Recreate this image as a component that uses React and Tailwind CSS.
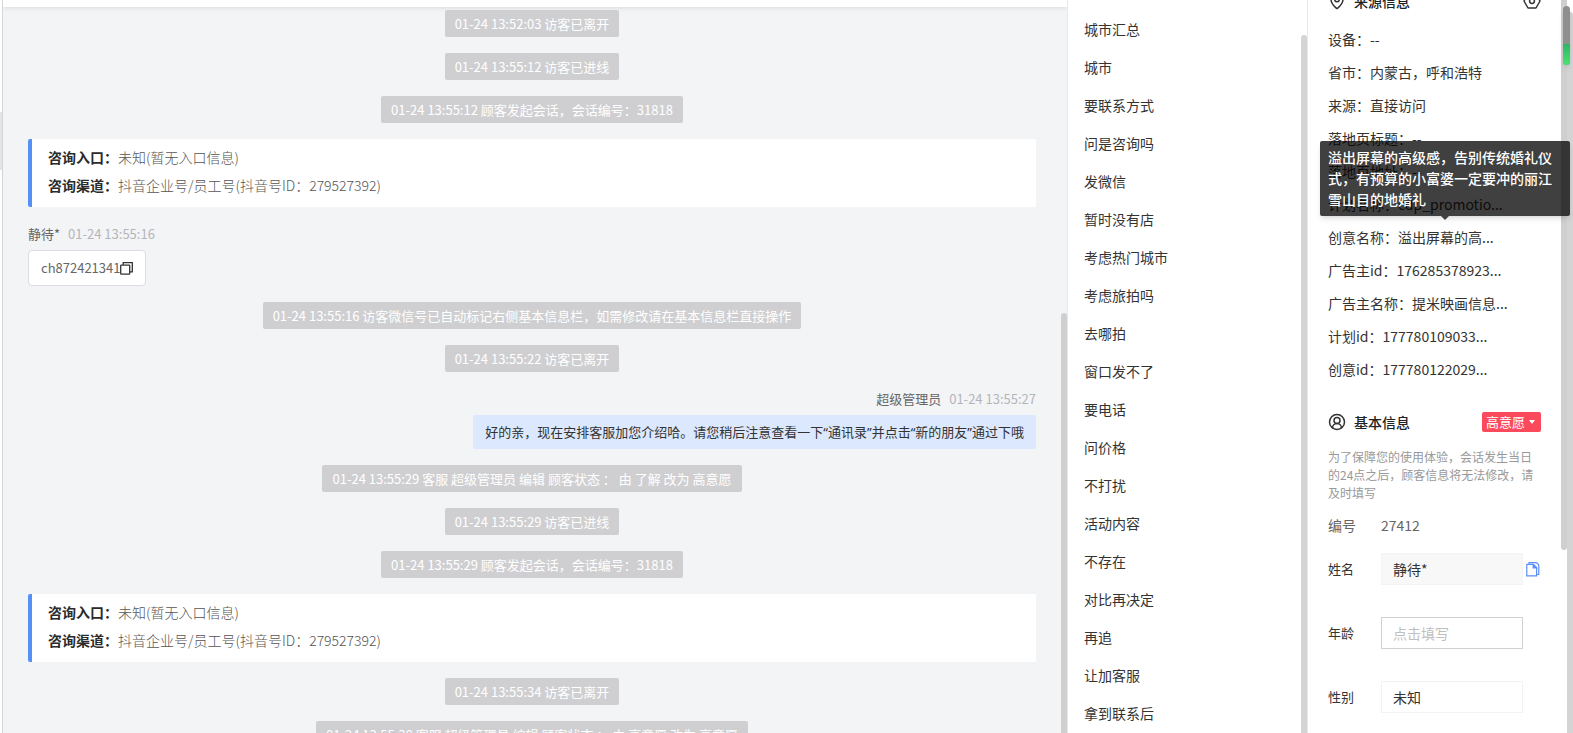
import { useState } from "react";
import { MapPin, CircleUserRound } from "lucide-react";

const messages = [
  { type: "system", text: "01-24 13:52:03 访客已离开" },
  { type: "system", text: "01-24 13:55:12 访客已进线" },
  { type: "system", text: "01-24 13:55:12 顾客发起会话，会话编号：31818" },
  { type: "entry" },
  { type: "visitor", name: "静待*", time: "01-24 13:55:16", text: "ch872421341" },
  { type: "system", text: "01-24 13:55:16 访客微信号已自动标记右侧基本信息栏，如需修改请在基本信息栏直接操作" },
  { type: "system", text: "01-24 13:55:22 访客已离开" },
  {
    type: "staff",
    name: "超级管理员",
    time: "01-24 13:55:27",
    text: "好的亲，现在安排客服加您介绍哈。请您稍后注意查看一下“通讯录”并点击“新的朋友”通过下哦",
  },
  { type: "system", text: "01-24 13:55:29 客服 超级管理员 编辑 顾客状态 ： 由 了解 改为 高意愿" },
  { type: "system", text: "01-24 13:55:29 访客已进线" },
  { type: "system", text: "01-24 13:55:29 顾客发起会话，会话编号：31818" },
  { type: "entry" },
  { type: "system", text: "01-24 13:55:34 访客已离开" },
  { type: "system", text: "01-24 13:55:38 客服 超级管理员 编辑 顾客状态 ： 由 高意愿 改为 高意愿" },
];

const quickReplies = [
  "城市汇总", "城市", "要联系方式", "问是咨询吗", "发微信", "暂时没有店",
  "考虑热门城市", "考虑旅拍吗", "去哪拍", "窗口发不了", "要电话", "问价格",
  "不打扰", "活动内容", "不存在", "对比再决定", "再追", "让加客服", "拿到联系后",
];

const sourceInfo = [
  { label: "设备", value: "--" },
  { label: "省市", value: "内蒙古，呼和浩特" },
  { label: "来源", value: "直接访问" },
  { label: "落地页标题", value: "--" },
  { label: "落地页地址", value: "--" },
  { label: "计划名称", value: "cdp_promotio..." },
  {
    label: "创意名称",
    value: "溢出屏幕的高...",
    tip: "溢出屏幕的高级感，告别传统婚礼仪式，有预算的小富婆一定要冲的丽江雪山目的地婚礼",
  },
  { label: "广告主id", value: "176285378923..." },
  { label: "广告主名称", value: "提米映画信息..." },
  { label: "计划id", value: "177780109033..." },
  { label: "创意id", value: "177780122029..." },
];

const CopyIcon = () => (
  <svg width="13" height="13" viewBox="0 0 13 13" fill="none" stroke="#333" strokeWidth="1.3">
    <rect x="0.7" y="3.2" width="9" height="9" rx="0.6" />
    <path d="M3.2 3V0.7h9.1v9.1H9.9" />
  </svg>
);

const DocCopyIcon = () => (
  <svg width="14" height="15" viewBox="0 0 14 15" fill="none" stroke="#5b8ff9" strokeWidth="1.2">
    <path d="M0.8 2.4h6.6l3.2 3.2v8.2H0.8z" />
    <path d="M7.2 2.6v3.2h3.2z" fill="#5b8ff9" />
    <path d="M3 2V0.7h6.4a3.4 3.4 0 0 1 3.4 3.4v8.4h-2" />
  </svg>
);

const HexIcon = () => (
  <svg width="18" height="16" viewBox="0 0 18 16" fill="none" stroke="#333" strokeWidth="1.5">
    <path d="M5 1h8l4 7-4 7H5L1 8z" strokeLinejoin="round" />
    <circle cx="9" cy="8" r="2.4" />
  </svg>
);

const EntryCard = () => (
  <div className="rounded-xs border-l-4 border-[#5590f6] bg-white px-4 pt-1 pb-2 text-sm leading-7 font-light text-[#555]">
    <p><b className="font-bold text-[#2b2b2b]">咨询入口：</b>未知(暂无入口信息)</p>
    <p><b className="font-bold text-[#2b2b2b]">咨询渠道：</b>抖音企业号/员工号(抖音号ID：279527392)</p>
  </div>
);

const Author = ({ name, time }) => (
  <div className="mb-[5px] flex gap-2 leading-[22px]">
    <span className="text-[#666]">{name}</span>
    <span className="text-[#b3b5b9]">{time}</span>
  </div>
);

const Message = ({ item }) => {
  if (item.type === "entry") return <EntryCard />;

  if (item.type === "visitor") {
    return (
      <div className="flex flex-col items-start">
        <Author name={item.name} time={item.time} />
        <div className="flex h-9 items-center rounded-sm border border-[#dcdee2] bg-white px-3 text-[#666]">
          {item.text}
          <button type="button" aria-label="复制" className="cursor-pointer">
            <CopyIcon />
          </button>
        </div>
      </div>
    );
  }

  if (item.type === "staff") {
    return (
      <div className="flex flex-col items-end">
        <Author name={item.name} time={item.time} />
        <div className="rounded-xs bg-[#dce8fd] px-3 py-1.5 font-['Noto_Sans','Noto_Sans_CJK_SC',sans-serif] leading-[22px] text-[#333]">
          {item.text}
        </div>
      </div>
    );
  }

  return (
    <div className="flex h-[27px] items-center self-center rounded-xs bg-[#cfcfd1] px-2.5 whitespace-nowrap text-white">
      {item.text}
    </div>
  );
};

const ChatPanel = () => (
  <main className="relative min-w-0 flex-1 overflow-hidden border-l border-[#d5d6da] bg-[#f3f4f6]">
    <div className="h-[7px] bg-white shadow-[0_1px_5px_rgba(0,0,0,0.1)]" />
    <div className="flex flex-col gap-4 pt-[3px] pr-[31px] pl-[25px] text-[13px]">
      {messages.map((item, i) => (
        <Message key={i} item={item} />
      ))}
    </div>
    <div className="absolute top-[313px] right-0 bottom-0 w-1.5 rounded-t-full bg-[#cfcfcf]" />
  </main>
);

const QuickReplies = () => (
  <aside className="relative w-60 shrink-0 overflow-hidden border-l border-[#e8e8e8] bg-white pt-2.5">
    <ul>
      {quickReplies.map((text) => (
        <li key={text}>
          <button type="button" className="h-[38px] w-full cursor-pointer px-4 text-left text-sm text-[#333]">
            {text}
          </button>
        </li>
      ))}
    </ul>
    <div className="absolute top-[35px] right-0 bottom-0 w-1.5 rounded-t-full bg-[#d4d4d4]" />
  </aside>
);

const Tooltip = ({ text }) => (
  <div className="absolute bottom-full -left-2 z-20 mb-[5px] w-[250px] rounded-xs bg-black/75 px-2 py-1.5 font-medium leading-[21px] text-white shadow-md">
    {text}
    <span className="absolute top-full left-1/2 -translate-x-1/2 border-x-4 border-t-4 border-x-transparent border-t-[#404040]" />
  </div>
);

const SectionTitle = ({ icon, title, children }) => (
  <div className="flex h-5 items-center">
    {icon}
    <h2 className="ml-2 flex-1 text-sm font-medium text-[#222]">{title}</h2>
    {children}
  </div>
);

const InfoPanel = () => {
  const [name, setName] = useState("静待*");
  const [age, setAge] = useState("");

  return (
    <aside className="relative w-[266px] shrink-0 overflow-hidden border-l border-[#e8e8e8] bg-white pr-8 pl-5 text-sm text-[#333]">
      <section className="-mt-[9px]">
        <SectionTitle icon={<MapPin size={18} strokeWidth={2} />} title="来源信息">
          <button type="button" aria-label="设置" className="cursor-pointer">
            <HexIcon />
          </button>
        </SectionTitle>
        <ul className="mt-3">
          {sourceInfo.map((row) => (
            <li key={row.label} className="relative h-[33px] leading-[33px] whitespace-nowrap">
              {row.label}：{row.value}
              {row.tip && (
                <div className="whitespace-normal">
                  <Tooltip text={row.tip} />
                </div>
              )}
            </li>
          ))}
        </ul>
      </section>

      <section className="mt-[26px]">
        <SectionTitle icon={<CircleUserRound size={18} strokeWidth={2} />} title="基本信息">
          <button
            type="button"
            className="flex h-5 cursor-pointer items-center gap-1 rounded-xs bg-[#fb4a5b] pr-1.5 pl-1 text-[13px] text-white"
          >
            高意愿
            <span className="border-x-3 border-t-4 border-x-transparent border-t-white" />
          </button>
        </SectionTitle>
        <p className="mt-4 text-xs leading-[18px] text-[#999]">
          为了保障您的使用体验，会话发生当日的24点之后，顾客信息将无法修改，请及时填写
        </p>
        <div className="mt-3 flex leading-[22px] text-[#666]">
          <span className="w-[53px]">编号</span>
          <span>27412</span>
        </div>
        <form className="mt-[17px] flex flex-col gap-8">
          <div className="flex items-center">
            <label htmlFor="name" className="w-[53px] text-[13px]">姓名</label>
            <input
              id="name"
              value={name}
              onChange={(e) => setName(e.target.value)}
              className="h-8 w-[142px] border border-[#f3f3f3] bg-[#f8f8f8] px-[11px]"
            />
            <button type="button" aria-label="复制姓名" className="ml-[3px] cursor-pointer">
              <DocCopyIcon />
            </button>
          </div>
          <div className="flex items-center">
            <label htmlFor="age" className="w-[53px] text-[13px]">年龄</label>
            <input
              id="age"
              value={age}
              placeholder="点击填写"
              onChange={(e) => setAge(e.target.value)}
              className="h-8 w-[142px] border border-[#d0d0d0] px-[11px] placeholder:text-[#bfbfbf]"
            />
          </div>
          <div className="flex items-center">
            <label htmlFor="gender" className="w-[53px] text-[13px]">性别</label>
            <select id="gender" className="h-8 w-[142px] appearance-none border border-[#f3f3f3] bg-white px-[11px]">
              <option>未知</option>
            </select>
          </div>
        </form>
      </section>

      {/* panel scrollbar, page scrollbar and the floating progress capsule */}
      <div className="absolute top-0 right-1.5 h-[550px] w-1.5 rounded-b-full bg-[#cfcfcf]" />
      <div className="absolute top-3 right-0 bottom-0 w-1.5 rounded-t-full bg-[#d4d4d4]" />
      <div className="absolute top-1.5 right-[3px] z-10 flex h-[59px] w-[7px] flex-col overflow-hidden rounded-full bg-[#8f8f8f] shadow-md">
        <div className="mt-auto h-[21px] bg-linear-to-b from-[#2fb566] to-[#4be36f]" />
      </div>
    </aside>
  );
};

const App = () => (
  <div className="flex h-screen overflow-hidden bg-white font-['Noto_Sans_CJK_SC',sans-serif]">
    <div className="w-0.5 shrink-0 pt-28">
      <div className="h-[58px] bg-[#e3e4e6]" />
    </div>
    <ChatPanel />
    <QuickReplies />
    <InfoPanel />
  </div>
);

export default App;
